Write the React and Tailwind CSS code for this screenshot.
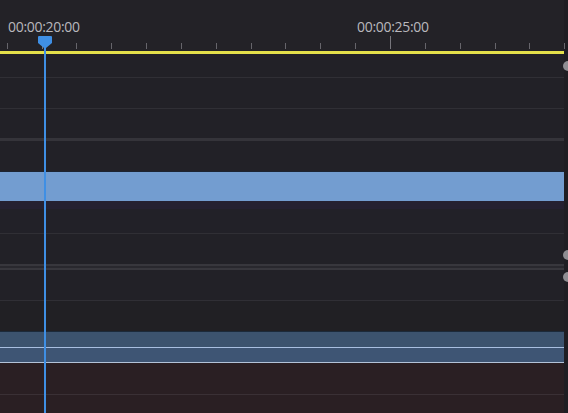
import React from 'react'

const TICK = 34.85
const START = 41.5
const ticks = Array.from({ length: 17 }, (_, i) => START - TICK + i * TICK)

function Ruler() {
  return (
    <div className="relative h-[51px] bg-[#232227]">
      {ticks.map((x, i) => {
        const major = i === 1 || i === 11
        return (
          <div
            key={i}
            className={major ? 'absolute bottom-[2px] w-px h-[13px] bg-[#77767c]' : 'absolute bottom-[2px] w-px h-[6px] bg-[#66656b]'}
            style={{ left: x }}
          />
        )
      })}
      <span className="absolute top-[16px] left-[8px] text-[14px] tracking-[-0.3px] text-[#b9b8bd] font-['Open_Sans',sans-serif]">00:00:20:00</span>
      <span className="absolute top-[16px] left-[357px] text-[14px] tracking-[-0.3px] text-[#b9b8bd] font-['Open_Sans',sans-serif]">00:00:25:00</span>
    </div>
  )
}

function Row({ h, bg = 'bg-[#222127]', line = 'border-[#302f35]', children }) {
  return (
    <div className={`${bg} ${line} border-b shrink-0`} style={{ height: h }}>
      {children}
    </div>
  )
}

export default function App() {
  return (
    <div className="relative w-[568px] h-[413px] overflow-hidden bg-[#222127] font-['Open_Sans',sans-serif]">
      <div className="flex w-full h-full">
        <div className="w-[564px] flex flex-col">
          <Ruler />
          <div className="h-[3px] bg-[#e4e04a]" />
          <Row h={24} />
          <Row h={31} />
          <div className="h-[29px] bg-[#222127]" />
          <div className="h-[3px] bg-[#35343a]" />
          <div className="h-[31px] bg-[#222127] border-b border-[#1c2432]" />
          <div className="h-[29px] bg-[#739dd0]" />
          <div className="h-[33px] flex flex-col bg-[#222128] border-b border-[#302f35]">
            <div className="h-[8px] bg-[#252131]" />
          </div>
          <div className="h-[30px] bg-[#222127]" />
          <div className="h-[2px] bg-[#38373d]" />
          <div className="h-[2px] bg-[#29282e]" />
          <div className="h-[2px] bg-[#38373d]" />
          <Row h={31} />
          <Row h={31} bg="bg-[#212024]" line="border-[#1c2a3a]" />
          <div className="h-[15px] bg-[#3c536e]" />
          <div className="h-px bg-[#a9bfe0]" />
          <div className="h-[14px] bg-[#3e5574]" />
          <div className="h-px bg-[#b3c3d8]" />
          <div className="h-[32px] bg-[#2a1f23] border-b border-[#3a3035]" />
          <div className="flex-1 bg-[#2a1f23]" />
        </div>
        <div className="w-[4px] bg-[#1f1e23]" />
      </div>

      {/* scrollbar knobs at right edge */}
      <div className="absolute left-[563px] top-[61px] w-[10px] h-[10px] rounded-full bg-[#8f8e93]" />
      <div className="absolute left-[563px] top-[250px] w-[10px] h-[10px] rounded-full bg-[#8f8e93]" />
      <div className="absolute left-[563px] top-[272px] w-[10px] h-[10px] rounded-full bg-[#8f8e93]" />

      {/* playhead */}
      <div className="absolute left-[44px] top-[44px] bottom-0 w-[2px] bg-[#3f8fe4]" />
      <svg className="absolute left-[38px] top-[36px]" width="14" height="13" viewBox="0 0 14 13">
        <path d="M1 0 H13 Q14 0 14 1 V7 L8 12 H6 L0 7 V1 Q0 0 1 0 Z" fill="#3f8fe4" />
      </svg>
    </div>
  )
}
